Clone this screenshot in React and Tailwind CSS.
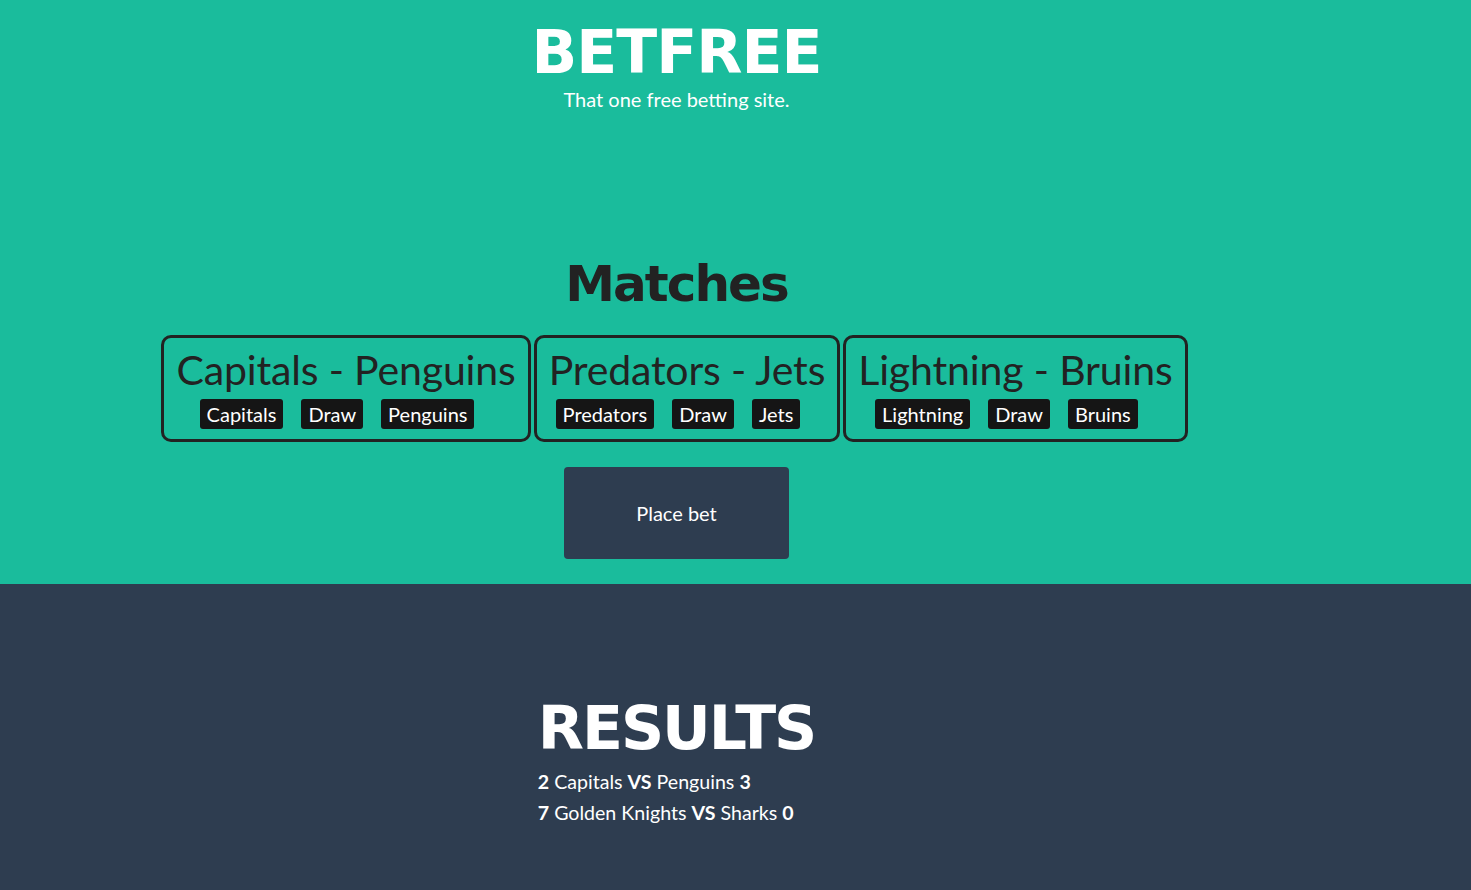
import React from 'react';

const matches = [
    { home: 'Capitals', away: 'Penguins' },
    { home: 'Predators', away: 'Jets' },
    { home: 'Lightning', away: 'Bruins' }
];

const results = [
    { homeScore: 2, home: 'Capitals', away: 'Penguins', awayScore: 3 },
    { homeScore: 7, home: 'Golden Knights', away: 'Sharks', awayScore: 0 }
];

const heading = { fontFamily: '"DejaVu Sans", sans-serif' };
const body = { fontFamily: 'Lato, "Open Sans", sans-serif' };

const MatchCard = ({ home, away }) => (
    <div className="border-[3px] border-[#222] rounded-[10px] px-[12px] pt-[6px] pb-[10px]">
        <h2 className="text-[41px] leading-[52px] text-[#222] whitespace-nowrap tracking-[-0.15px]">
            {home} - {away}
        </h2>
        <div className="flex justify-center mt-[3px]">
            {[home, 'Draw', away].map(option => (
                <button
                    key={option}
                    className="bg-[#151515] text-white text-[20px] leading-[30px] px-[7px] rounded-[3px] mr-[18px]"
                >
                    {option}
                </button>
            ))}
        </div>
    </div>
);

const App = () => {
    return (
        <div className="min-h-[890px] bg-[#2e3d50]" style={body}>
            {/* Betting section */}
            <section className="bg-[#1abc9c] h-[584px]">
                <div className="w-[1353px] flex flex-col items-center">
                    <h1
                        className="text-white text-[60px] font-bold leading-none mt-[22px] tracking-[-1px]"
                        style={heading}
                    >
                        BETFREE
                    </h1>
                    <p className="text-white text-[20px] leading-[24px] mt-[5px]">That one free betting site.</p>

                    <h2
                        className="text-[#222] text-[50px] font-bold leading-none mt-[148px] tracking-[-2px]"
                        style={heading}
                    >
                        Matches
                    </h2>

                    <div className="flex gap-[3px] mt-[26px] ml-[-4px]">
                        {matches.map(m => (
                            <MatchCard key={m.home} {...m} />
                        ))}
                    </div>

                    <button className="w-[225px] h-[92px] bg-[#2e3d50] rounded-[4px] text-white text-[20px] mt-[25px]">
                        Place bet
                    </button>
                </div>
            </section>

            {/* Results section */}
            <section className="w-[1353px] flex justify-center pt-[114px]">
                <div className="w-fit">
                    <h2
                        className="text-white text-[60px] font-bold leading-none tracking-[-2px] text-center"
                        style={heading}
                    >
                        RESULTS
                    </h2>
                    <div className="text-white text-[19.6px] leading-[31px] mt-[8px]">
                        {results.map(r => (
                            <p key={r.home}>
                                <b>{r.homeScore}</b> {r.home} <b>VS</b> {r.away} <b>{r.awayScore}</b>
                            </p>
                        ))}
                    </div>
                </div>
            </section>
        </div>
    );
};

export default App;
